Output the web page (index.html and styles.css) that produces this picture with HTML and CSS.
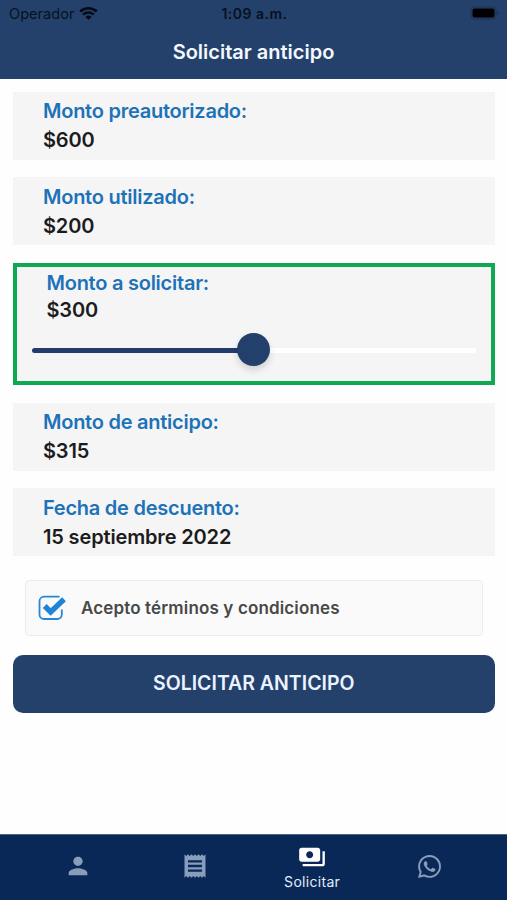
FILE: index.html
```html
<!DOCTYPE html>
<html lang="es">
<head>
<meta charset="utf-8">
<meta name="viewport" content="width=device-width, initial-scale=1">
<title>Solicitar anticipo</title>
<link rel="stylesheet" href="styles.css">
</head>
<body>
<div class="app">
  <header class="header">
    <div class="status">
      <div class="carrier">
        <span class="carrier-name">Operador</span>
        <svg class="wifi" viewBox="0 0 18 14" width="19" height="14.500">
          <path d="M1 5.3a11.6 11.6 0 0 1 16 0" fill="none" stroke="#050b14" stroke-width="2.5"/>
          <path d="M3.8 8.3a7.6 7.6 0 0 1 10.4 0" fill="none" stroke="#050b14" stroke-width="2.3"/>
          <path d="M9 13.3 6 10.5a4.4 4.4 0 0 1 6 0z" fill="#050b14"/>
        </svg>
      </div>
      <span class="clock">1:09 a.m.</span>
      <svg class="battery" viewBox="0 0 30 14" width="30" height="14">
        <rect x="1" y="1" width="25" height="12" rx="3.5" fill="none" stroke="#1b3155" stroke-width="1"/>
        <rect x="2.5" y="2.5" width="22" height="9" rx="2" fill="#000"/>
        <path d="M27.3 5v4c1-.3 1.5-1 1.5-2s-.5-1.700-1.500-2z" fill="#1b3155"/>
      </svg>
    </div>
    <h1 class="title">Solicitar anticipo</h1>
  </header>

  <main class="content">
    <section class="card">
      <h2 class="label">Monto preautorizado:</h2>
      <p class="value">$600</p>
    </section>
    <section class="card">
      <h2 class="label">Monto utilizado:</h2>
      <p class="value">$200</p>
    </section>
    <section class="card card-active">
      <h2 class="label">Monto a solicitar:</h2>
      <p class="value">$300</p>
      <div class="slider">
        <div class="slider-fill"></div>
        <div class="slider-thumb"></div>
      </div>
    </section>
    <section class="card">
      <h2 class="label">Monto de anticipo:</h2>
      <p class="value">$315</p>
    </section>
    <section class="card">
      <h2 class="label">Fecha de descuento:</h2>
      <p class="value">15 septiembre 2022</p>
    </section>

    <div class="terms">
      <svg class="check" viewBox="0 0 30 26" width="30" height="26">
        <path d="M21.500 1.700H6a4.500 4.500 0 0 0-4.500 4.500v13.300A4.500 4.500 0 0 0 6 24h13.300a4.500 4.500 0 0 0 4.500-4.500V14.500" fill="none" stroke="#2587d8" stroke-width="1.800"/>
        <path d="m6.700 11 6 6L26 4.300" fill="none" stroke="#1f83d6" stroke-width="5.400"/>
      </svg>
      <span class="terms-text">Acepto términos y condiciones</span>
    </div>

    <button class="submit" type="button">SOLICITAR ANTICIPO</button>
  </main>

  <nav class="tabs">
    <a class="tab">
      <svg viewBox="0 0 24 24" width="28" height="28"><path fill="currentColor" d="M12 12c2.210 0 4-1.790 4-4s-1.790-4-4-4-4 1.790-4 4 1.790 4 4 4zm0 2c-2.670 0-8 1.340-8 4v2h16v-2c0-2.660-5.330-4-8-4z"/></svg>
    </a>
    <a class="tab">
      <svg viewBox="0 0 24 24" width="28" height="28"><path fill="currentColor" d="M18 17H6v-2h12v2zm0-4H6v-2h12v2zm0-4H6V7h12v2zM3 22l1.500-1.500L6 22l1.500-1.500L9 22l1.500-1.500L12 22l1.500-1.500L15 22l1.500-1.500L18 22l1.500-1.500L21 22V2l-1.500 1.500L18 2l-1.500 1.500L15 2l-1.500 1.500L12 2l-1.500 1.500L9 2 7.500 3.500 6 2 4.500 3.500 3 2v20z"/></svg>
    </a>
    <a class="tab tab-active">
      <svg viewBox="0 0 24 24" width="28" height="28"><path fill="currentColor" d="M19 14V6c0-1.100-.9-2-2-2H3c-1.100 0-2 .9-2 2v8c0 1.100.9 2 2 2h14c1.100 0 2-.9 2-2zm-9-1c-1.660 0-3-1.340-3-3s1.340-3 3-3 3 1.340 3 3-1.340 3-3 3zm13-6v11c0 1.100-.9 2-2 2H4v-2h17V7h2z"/></svg>
      <span class="tab-label">Solicitar</span>
    </a>
    <a class="tab">
      <svg viewBox="0 0 24 24" width="23" height="23"><path fill="currentColor" d="M17.472 14.382c-.297-.149-1.758-.867-2.030-.967-.273-.099-.471-.148-.67.150-.197.297-.767.966-.94 1.164-.173.199-.347.223-.644.075-.297-.150-1.255-.463-2.390-1.475-.883-.788-1.480-1.761-1.653-2.059-.173-.297-.018-.458.130-.606.134-.133.298-.347.446-.52.149-.174.198-.298.298-.497.099-.198.050-.371-.025-.520-.075-.149-.669-1.612-.916-2.207-.242-.579-.487-.500-.669-.510-.173-.008-.371-.010-.570-.010-.198 0-.520.074-.792.372-.272.297-1.040 1.016-1.040 2.479 0 1.462 1.065 2.875 1.213 3.074.149.198 2.096 3.200 5.077 4.487.709.306 1.262.489 1.694.625.712.227 1.360.195 1.871.118.571-.085 1.758-.719 2.006-1.413.248-.694.248-1.289.173-1.413-.074-.124-.272-.198-.570-.347m-5.421 7.403h-.004a9.870 9.870 0 0 1-5.031-1.378l-.361-.214-3.741.982.998-3.648-.235-.374a9.860 9.860 0 0 1-1.510-5.260c.001-5.450 4.436-9.884 9.888-9.884 2.640 0 5.122 1.030 6.988 2.898a9.825 9.825 0 0 1 2.893 6.994c-.003 5.450-4.437 9.884-9.885 9.884m8.413-18.297A11.815 11.815 0 0 0 12.050 0C5.495 0 .160 5.335.157 11.892c0 2.096.547 4.142 1.588 5.945L.057 24l6.305-1.654a11.882 11.882 0 0 0 5.683 1.448h.005c6.554 0 11.890-5.335 11.893-11.893a11.821 11.821 0 0 0-3.480-8.413z"/></svg>
    </a>
  </nav>
</div>
</body>
</html>
```
FILE: styles.css
```css
* {
  box-sizing: border-box;
}

body {
  margin: 0;
  background: #fefefe;
  font-family: Inter, "Liberation Sans", sans-serif;
}

h1, h2, p {
  margin: 0;
}

.app {
  display: flex;
  flex-direction: column;
  height: 900px;
}

.header {
  height: 79px;
  background: #24416b;
}

.status {
  display: grid;
  grid-template-columns: 1fr auto 1fr;
  align-items: center;
  height: 27px;
  padding: 0 7px 0 9px;
  color: #07111f;
  font-size: 14px;
}

.carrier {
  display: flex;
  align-items: center;
  gap: 5px;
}

.carrier-name {
  font-size: 14.500px;
  letter-spacing: 0.05px;
}

.clock {
  font-weight: 600;
  letter-spacing: 0.5px;
}

.wifi {
  margin-top: -1px;
}

.battery {
  justify-self: end;
  margin-top: -1px;
}

.title {
  color: #f4f8ff;
  font-size: 20px;
  font-weight: 600;
  line-height: 50px;
  text-align: center;
}

.content {
  display: flex;
  flex: 1;
  flex-direction: column;
  padding: 13px 12.500px 0 13px;
}

.card {
  height: 68px;
  margin-bottom: 17.300px;
  padding: 5.400px 30px 0;
  background: #f5f5f5;
}

.label,
.value {
  font-size: 20px;
  font-weight: 600;
  line-height: 29px;
}

.label {
  color: #1d72b8;
  letter-spacing: -0.250px;
}

.value {
  color: #1c1c1c;
  letter-spacing: -0.150px;
}

.card-active {
  height: 122px;
  margin-bottom: 18.500px;
  padding: 3px 15px 0;
  border: 4px solid #10a850;
}

.card-active .label,
.card-active .value {
  padding-left: 14.500px;
  line-height: 27px;
}

.slider {
  display: flex;
  align-items: center;
  height: 5px;
  margin-top: 24.500px;
  border-radius: 3px;
  background: #fff;
}

.slider-fill {
  width: 50%;
  height: 5px;
  border-radius: 3px;
  background: #233c6c;
}

.slider-thumb {
  flex: none;
  width: 33px;
  height: 33px;
  margin: -3px 0 0 -17px;
  border-radius: 50%;
  background: #233f6c;
  box-shadow: 0 4px 7px rgba(0, 0, 0, 0.15);
}

.terms {
  display: flex;
  align-items: center;
  gap: 13px;
  height: 56px;
  margin: 6px 12px 19px;
  padding: 0 0 0 12px;
  border: 1px solid #ececec;
  border-radius: 4px;
  background: #fafafa;
}

.terms-text {
  color: #484848;
  font-size: 17px;
  font-weight: 600;
  letter-spacing: 0.140px;
}

.submit {
  height: 58px;
  padding: 0 0 2px;
  border: 0;
  border-radius: 10px;
  background: #24416b;
  color: #eaf3ff;
  font: 600 19.500px/56px Inter, "Liberation Sans", sans-serif;
}

.tabs {
  display: grid;
  grid-template-columns: repeat(4, 1fr);
  height: 66px;
  padding: 0 19px;
  border-top: 1px solid #4d648a;
  background: #092858;
}

.tab {
  display: flex;
  flex-direction: column;
  align-items: center;
  justify-content: center;
  padding-bottom: 3px;
  color: #879db9;
}

.tab-active {
  justify-content: flex-start;
  padding-top: 8px;
  color: #fff;
}

.tab-label {
  color: #e4edf9;
  font-size: 14px;
  letter-spacing: 0.300px;
  line-height: 22px;
}
```
